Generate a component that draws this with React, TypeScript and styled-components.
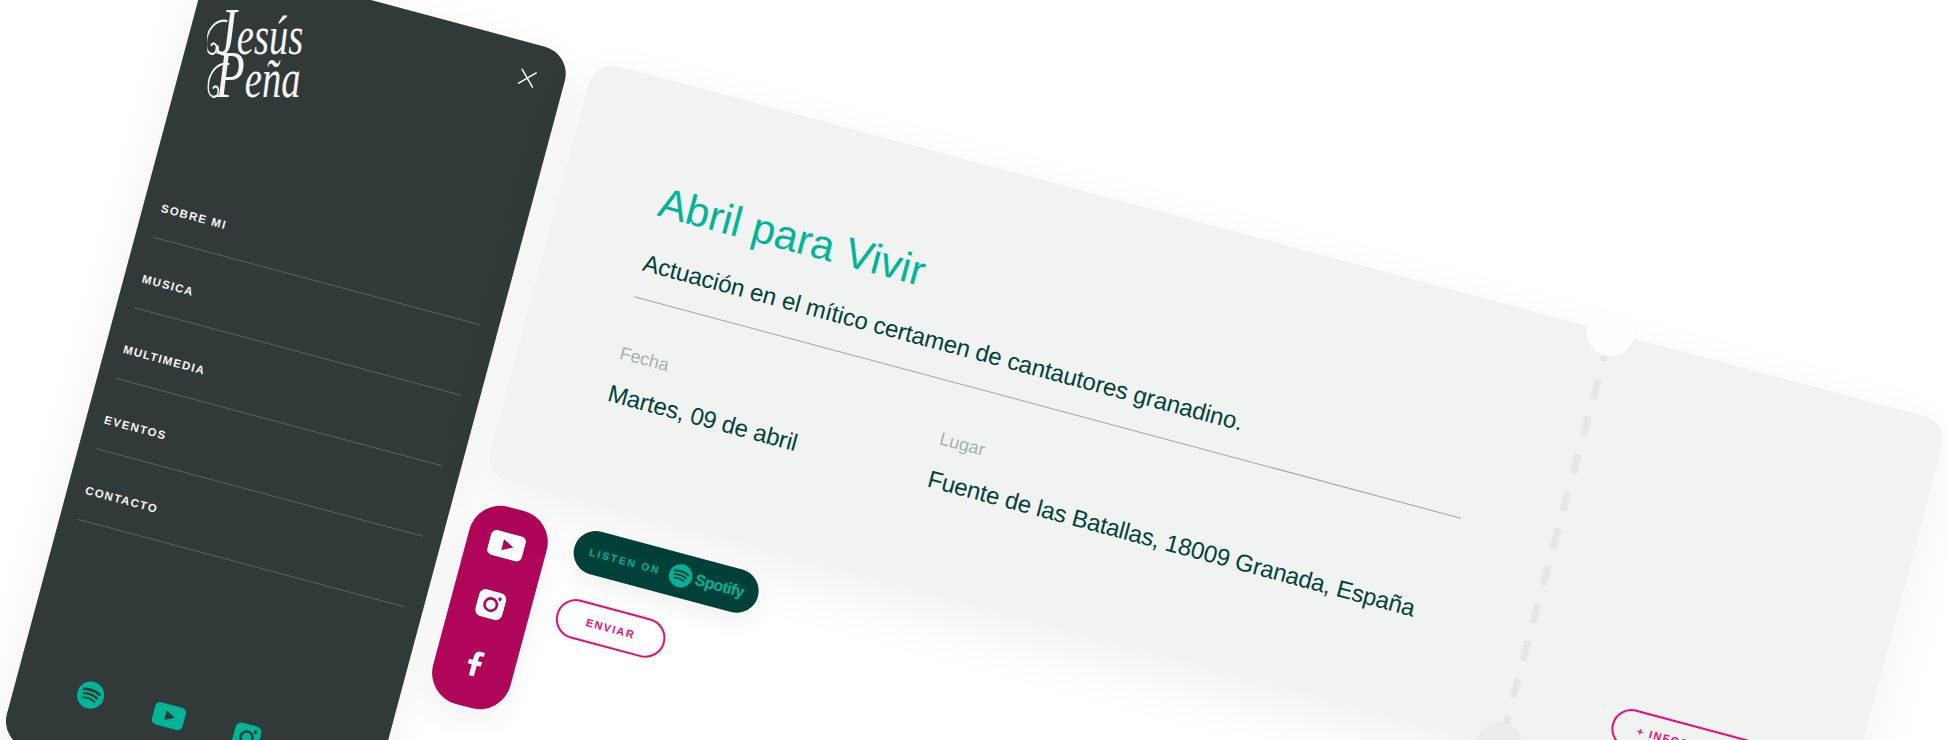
import styled, { createGlobalStyle } from 'styled-components';
import { FaFacebookF, FaSpotify } from 'react-icons/fa';

const GlobalStyle = createGlobalStyle`
    html, body {
        margin: 0;
        height: 740px;
        overflow: hidden;
        background: #fff;
        font-family: "Liberation Sans", Arial, sans-serif;
    }
`;

const Stage = styled.div`
    width: 1948px;
    height: 740px;
    overflow: hidden;
`;

// the whole mock is one rotated board, everything in it flows normally
const Board = styled.div`
    display: flex;
    gap: 24px;
    width: max-content;
    transform-origin: 0 0;
    transform: rotate(15deg) translate(191.5px, -96px);
`;

const Sidebar = styled.aside`
    display: flex;
    flex-direction: column;
    flex: none;
    width: 375px;
    height: 812px;
    border-radius: 28px;
    background: #323a39;
    box-shadow: 0 14px 50px rgba(0, 0, 0, 0.06);
`;

const SidebarHeader = styled.div`
    display: flex;
    justify-content: space-between;
    align-items: flex-start;
    height: 213px;
    padding: 27px 29px 0 18px;
    box-sizing: border-box;
`;

// the logo is upright on the picture, so it turns back against the board
const Logo = styled.div`
    position: relative;
    box-sizing: border-box;
    width: 100px;
    margin-top: 26px;
    padding-left: 9px;
    color: #f4f5f4;
    font-family: "Liberation Serif", "Times New Roman", serif;
    font-style: italic;
    font-size: 42px;
    line-height: 33px;
    text-align: center;
    transform: rotate(-15deg) scale(0.92, 1.3);
`;

const LogoInitial = styled.span`
    font-size: 52px;
    line-height: 0;
`;

const LogoSwash = styled.svg`
    position: absolute;
    top: 0;
    left: 0;
    width: 100px;
    height: 66px;
    fill: none;
    stroke: #f4f5f4;
    stroke-width: 1.7;
`;

const CloseIcon = styled.svg`
    display: block;
    width: 16px;
    height: 16px;
    stroke: #fff;
    stroke-width: 1.4;
`;

const Nav = styled.nav`
    display: flex;
    flex-direction: column;
    width: 338px;
    margin-left: 18px;
`;

const NavItem = styled.a`
    display: flex;
    align-items: flex-end;
    height: 73px;
    padding-bottom: 23px;
    box-sizing: border-box;
    border-bottom: 1px solid #5c6563;
    color: #f4f5f4;
    font-size: 11.5px;
    font-weight: 700;
    line-height: 14px;
    letter-spacing: 1.35px;
`;

const SidebarFooter = styled.div`
    display: grid;
    grid-template-columns: repeat(4, 81px);
    align-items: center;
    justify-items: center;
    margin-top: auto;
    padding: 0 0 54px 35px;
    color: #00b498;
`;

const Main = styled.div`
    display: flex;
    flex-direction: column;
    gap: 25px;
`;

const Ticket = styled.section`
    position: relative;
    display: flex;
    width: 1401px;
    height: 429px;
    border-radius: 24px;
    background: #f1f3f2;
    box-shadow: 0 20px 60px rgba(0, 0, 0, 0.06);
`;

const TicketBody = styled.div`
    flex: none;
    width: 1051px;
    padding: 95px 96px 0 99px;
    box-sizing: border-box;
`;

const Title = styled.h1`
    margin: 0;
    color: #00b498;
    font-size: 42px;
    font-weight: 400;
    line-height: 50px;
    letter-spacing: 0.1px;
`;

const Subtitle = styled.p`
    margin: 23px 0 0;
    padding-bottom: 20px;
    border-bottom: 1px solid #9ba6a3;
    color: #00423a;
    font-size: 24px;
    line-height: 30px;
    letter-spacing: -0.12px;
`;

const Details = styled.div`
    display: grid;
    grid-template-columns: 331px 1fr;
    margin-top: 45px;
`;

const Label = styled.div`
    padding-left: 1px;
    color: #a6b0ad;
    font-size: 18px;
    line-height: 24px;
`;

const Value = styled.div`
    margin-top: 15px;
    color: #00423a;
    font-size: 24px;
    line-height: 30px;
    letter-spacing: -0.2px;
    white-space: nowrap;
`;

const Perforation = styled.div`
    flex: none;
    width: 7px;
    margin-left: -3px;
    background: repeating-linear-gradient(to bottom, #e5e7e6 0 20px, transparent 20px 38.7px) 0 10px;
`;

const Notch = styled.div<{ $side: 'top' | 'bottom' }>`
    position: absolute;
    left: 1027px;
    ${p => p.$side}: -24px;
    width: 48px;
    height: 48px;
    border-radius: 50%;
    background: ${p => (p.$side === 'top' ? '#fefefe' : '#ebeceb')};
`;

const Stub = styled.div`
    display: flex;
    flex: 1;
    align-items: flex-end;
    padding: 0 0 31px 99px;
`;

const Actions = styled.div`
    display: flex;
    gap: 26px;
`;

const SocialPill = styled.div`
    display: flex;
    flex-direction: column;
    align-items: center;
    justify-content: space-between;
    box-sizing: border-box;
    width: 80px;
    height: 204px;
    padding: 25px 0 31px;
    border-radius: 32px;
    background: #b0065a;
    box-shadow: 0 12px 30px rgba(0, 0, 0, 0.06);
    color: #fff;
`;

const ButtonColumn = styled.div`
    display: flex;
    flex-direction: column;
    align-items: flex-start;
    gap: 27px;
`;

const SpotifyButton = styled.a`
    display: flex;
    align-items: center;
    box-sizing: border-box;
    width: 190px;
    height: 44px;
    padding-left: 16px;
    border-radius: 22px;
    background: #00423a;
    box-shadow: 0 10px 24px rgba(0, 0, 0, 0.06);
    color: #00b498;
`;

const ListenOn = styled.span`
    margin-right: 9px;
    font-size: 10.5px;
    font-weight: 700;
    letter-spacing: 1.9px;
    white-space: nowrap;
`;

const SpotifyWord = styled.span`
    margin-left: 3px;
    font-size: 16px;
    font-weight: 700;
    letter-spacing: -0.6px;
`;

const OutlineButton = styled.a<{ $wide?: boolean }>`
    display: flex;
    align-items: center;
    justify-content: center;
    box-sizing: border-box;
    flex: none;
    width: ${p => (p.$wide ? '160px' : '112px')};
    height: 40px;
    border: 2px solid #ee0a72;
    border-radius: 20px;
    color: #ee0a72;
    font-size: 11px;
    font-weight: 700;
    letter-spacing: 1.5px;
    white-space: nowrap;
`;

const menu = ['SOBRE MI', 'MUSICA', 'MULTIMEDIA', 'EVENTOS', 'CONTACTO'];

function YoutubeIcon({ w, h, hole }: { w: number; h: number; hole: string }) {
    return (
        <svg width={w} height={h} viewBox="0 0 36 26">
            <rect width="36" height="26" rx="6" fill="currentColor" />
            <path d="M14 7.5 25 13 14 18.5Z" fill={hole} />
        </svg>
    );
}

function InstagramIcon({ size, hole }: { size: number; hole: string }) {
    return (
        <svg width={size} height={size} viewBox="0 0 28 28">
            <rect width="28" height="28" rx="7" fill="currentColor" />
            <circle cx="14" cy="14" r="6.2" fill="none" stroke={hole} strokeWidth="2.6" />
            <circle cx="21.6" cy="6.4" r="1.7" fill={hole} />
        </svg>
    );
}

export default function App() {
    return (
        <Stage>
            <GlobalStyle />
            <Board>
                <Sidebar>
                    <SidebarHeader>
                        <Logo>
                            <LogoInitial>J</LogoInitial>esús
                            <br />
                            <LogoInitial>P</LogoInitial>eña
                            <LogoSwash viewBox="0 0 100 66">
                                <path d="M22 5C9 3-1 12-1 23-1 31 9 33 10 26 10.500 22 6 21 4 24" />
                                <path d="M24 38C11 36 1 45 1 56 1 64 11 66 12 59 12.500 55 8 54 6 57" />
                            </LogoSwash>
                        </Logo>
                        <CloseIcon viewBox="0 0 16 16">
                            <path d="M0 0 16 16M16 0 0 16" />
                        </CloseIcon>
                    </SidebarHeader>
                    <Nav>
                        {menu.map(item => (
                            <NavItem key={item}>{item}</NavItem>
                        ))}
                    </Nav>
                    <SidebarFooter>
                        <FaSpotify size={28} />
                        <YoutubeIcon w={32} h={24} hole="#323a39" />
                        <InstagramIcon size={27} hole="#323a39" />
                        <FaFacebookF size={24} />
                    </SidebarFooter>
                </Sidebar>
                <Main>
                    <Ticket>
                        <TicketBody>
                            <Title>Abril para Vivir</Title>
                            <Subtitle>Actuación en el mítico certamen de cantautores granadino.</Subtitle>
                            <Details>
                                <div>
                                    <Label>Fecha</Label>
                                    <Value>Martes, 09 de abril</Value>
                                </div>
                                <div>
                                    <Label>Lugar</Label>
                                    <Value>Fuente de las Batallas, 18009 Granada, España</Value>
                                </div>
                            </Details>
                        </TicketBody>
                        <Perforation />
                        <Notch $side="top" />
                        <Notch $side="bottom" />
                        <Stub>
                            <OutlineButton $wide>+ INFORMACIÓN</OutlineButton>
                        </Stub>
                    </Ticket>
                    <Actions>
                        <SocialPill>
                            <YoutubeIcon w={36} h={26} hole="#b0065a" />
                            <InstagramIcon size={28} hole="#b0065a" />
                            <FaFacebookF size={26} />
                        </SocialPill>
                        <ButtonColumn>
                            <SpotifyButton>
                                <ListenOn>LISTEN ON</ListenOn>
                                <FaSpotify size={24} />
                                <SpotifyWord>Spotify</SpotifyWord>
                            </SpotifyButton>
                            <OutlineButton>ENVIAR</OutlineButton>
                        </ButtonColumn>
                    </Actions>
                </Main>
            </Board>
        </Stage>
    );
}
